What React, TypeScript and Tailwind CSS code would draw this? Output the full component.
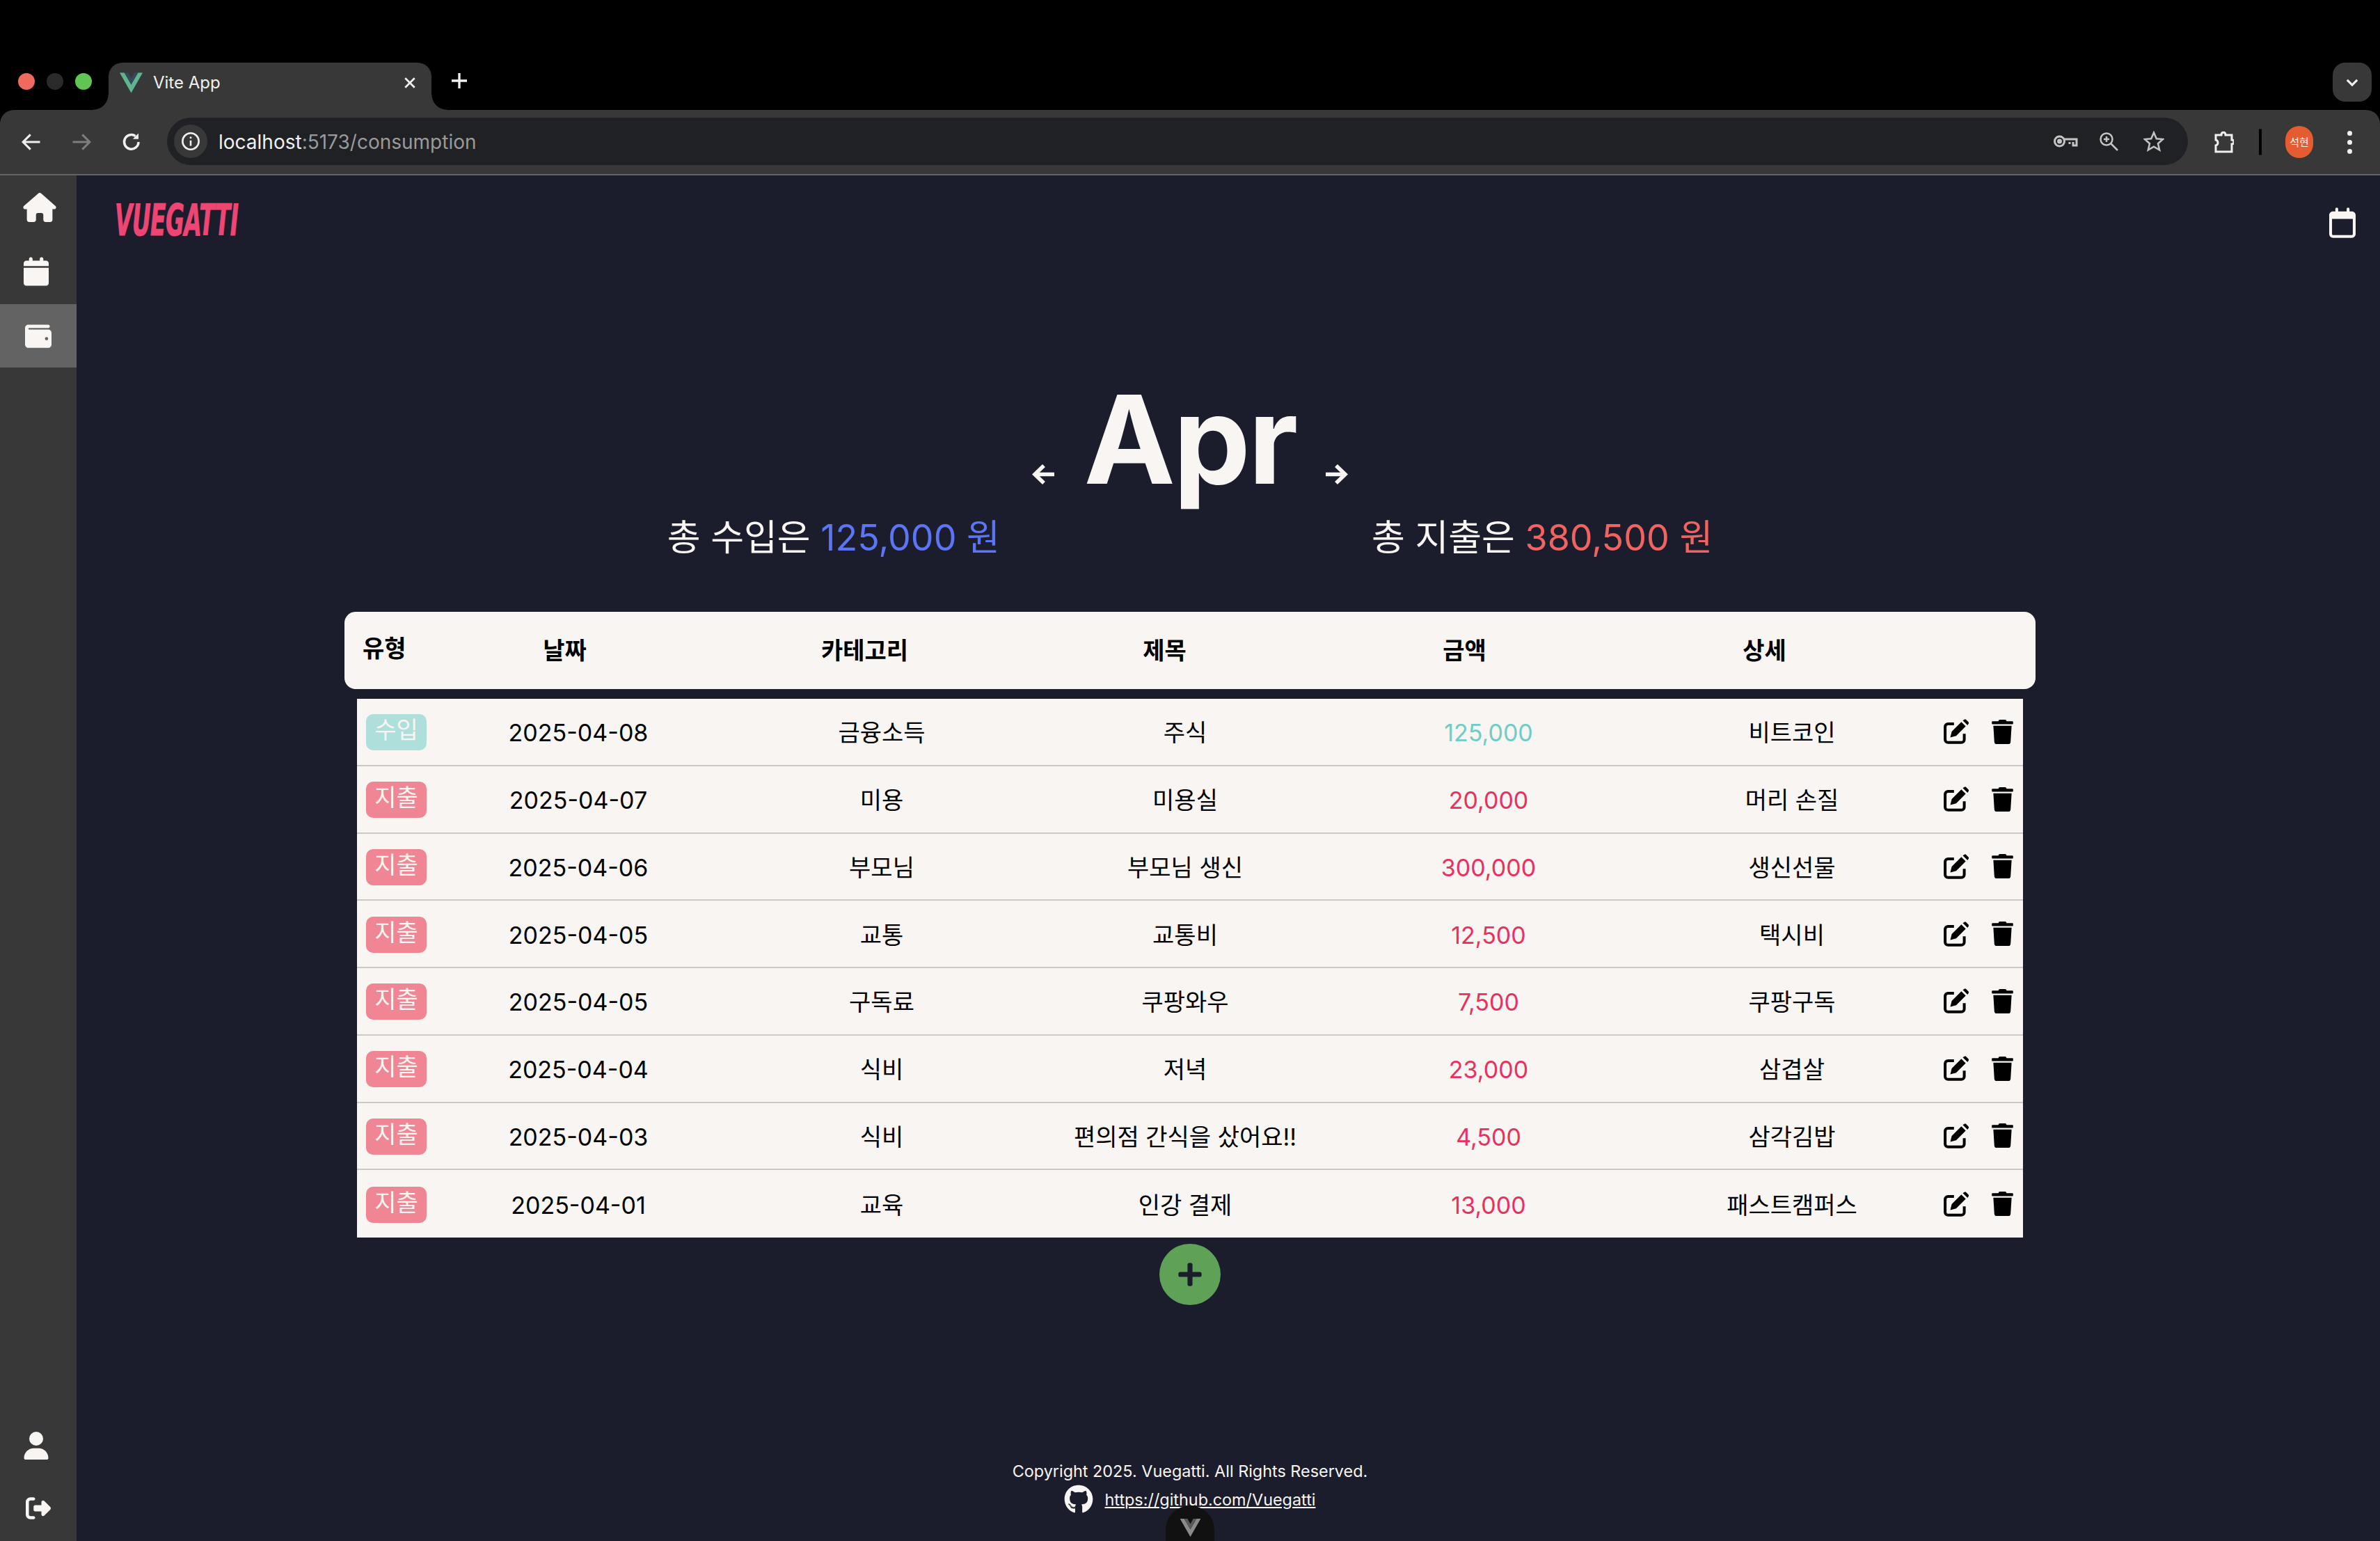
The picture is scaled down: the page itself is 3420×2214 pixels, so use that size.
import React from "react";
import { FaHouse, FaCalendar, FaWallet, FaUser, FaRightFromBracket, FaGithub, FaRegCalendar } from "react-icons/fa6";
import { FaTrash, FaPlus } from "react-icons/fa";

const font = "[font-family:Inter,'Noto_Sans_CJK_KR',sans-serif]";

const rows = [
  ["수입", "2025-04-08", "금융소득", "주식", "125,000", "비트코인"],
  ["지출", "2025-04-07", "미용", "미용실", "20,000", "머리 손질"],
  ["지출", "2025-04-06", "부모님", "부모님 생신", "300,000", "생신선물"],
  ["지출", "2025-04-05", "교통", "교통비", "12,500", "택시비"],
  ["지출", "2025-04-05", "구독료", "쿠팡와우", "7,500", "쿠팡구독"],
  ["지출", "2025-04-04", "식비", "저녁", "23,000", "삼겹살"],
  ["지출", "2025-04-03", "식비", "편의점 간식을 샀어요!!", "4,500", "삼각김밥"],
  ["지출", "2025-04-01", "교육", "인강 결제", "13,000", "패스트캠퍼스"],
];

function VueLogo({ className, a = "#5fb58e", b = "#35495e" }: { className: string; a?: string; b?: string }) {
  return (
    <svg viewBox="0 0 32 28" className={className}>
      <polygon points="0,0 6.5,0 16,16.5 25.5,0 32,0 16,28" fill={a} />
      <polygon points="6.5,0 11.5,0 16,8 20.5,0 25.5,0 16,16.5" fill={b} />
    </svg>
  );
}

function EditIcon() {
  return (
    <svg viewBox="0 0 35 34" className="w-[37px] h-[36px]">
      <path d="M14 6.5 H6 a4 4 0 0 0 -4 4 V28 a4 4 0 0 0 4 4 H24 a4 4 0 0 0 4 -4 V20" fill="none" stroke="#000" strokeWidth="3.8" />
      <polygon points="9,25 11,17 24,4 30,10 17,23" fill="#000" />
      <polygon points="26,2 28.5,0.5 30,0.5 34,4.5 34,6 32.5,8.5" fill="#000" />
    </svg>
  );
}

function MonthArrow({ flip }: { flip?: boolean }) {
  return (
    <svg viewBox="0 0 32 32" className={`w-[32px] h-[32px] mt-[92px] ${flip ? "-scale-x-100" : ""}`} fill="none" stroke="#f8f5f2" strokeWidth="5.6">
      <path d="M32 15.5 H4 M17 3 L4 15.5 L17 28" />
    </svg>
  );
}

function TabBar() {
  return (
    <div className="h-[158px] bg-black flex items-start relative">
      <div className="flex gap-[17px] pl-[26px] pt-[105px] w-[156px] shrink-0">
        <span className="w-6 h-6 rounded-full bg-[#ee6a5f]" />
        <span className="w-6 h-6 rounded-full bg-[#2a2a2a]" />
        <span className="w-6 h-6 rounded-full bg-[#61c554]" />
      </div>
      <div className="relative mt-[90px] h-[68px] w-[464px] bg-[#383838] rounded-t-[20px] flex items-center pl-[16px] pr-[22px] pb-[10px] z-10">
        <span className="absolute -left-[22px] bottom-0 w-[22px] h-[22px] bg-[radial-gradient(circle_at_0_0,#000_21px,#383838_22px)]" />
        <span className="absolute -right-[22px] bottom-0 w-[22px] h-[22px] bg-[radial-gradient(circle_at_100%_0,#000_21px,#383838_22px)]" />
        <VueLogo className="w-[33px] h-[42px]" />
        <span className="ml-[15px] text-[24px] text-[#f0f0f0] font-[Inter,sans-serif] grow">Vite App</span>
        <svg viewBox="0 0 16 16" className="w-[18px] h-[20px]" stroke="#f0f0f0" strokeWidth="2.4"><path d="M2 2 L14 14 M14 2 L2 14" /></svg>
      </div>
      <svg viewBox="0 0 20 20" className="ml-[29px] mt-[105px] w-[22px] h-[22px]" stroke="#f0f0f0" strokeWidth="3"><path d="M10 0 V20 M0 10 H20" /></svg>
      <div className="absolute right-[12px] top-[90px] w-[56px] h-[56px] rounded-[18px] bg-[#383838] flex items-center justify-center">
        <svg viewBox="0 0 20 14" className="w-[18px] h-[13px]" fill="none" stroke="#f0f0f0" strokeWidth="3.4"><path d="M2 3 L10 11 L18 3" /></svg>
      </div>
    </div>
  );
}

function Toolbar() {
  return (
    <div className="h-[94px] bg-[#383838] rounded-t-[20px] border-b-2 border-[#636363] flex items-center pl-[30px] pr-0 relative">
      <div className="flex items-center gap-[42px]">
        <svg viewBox="0 0 24 24" className="w-[30px] h-[30px]" fill="none" stroke="#f0f0f0" strokeWidth="2.4"><path d="M22 12 H3 M11 3.5 L2.5 12 L11 20.5" /></svg>
        <svg viewBox="0 0 24 24" className="w-[30px] h-[30px]" fill="none" stroke="#7d7d7d" strokeWidth="2.4"><path d="M2 12 H21 M13 3.5 L21.5 12 L13 20.5" /></svg>
        <svg viewBox="0 0 24 24" className="w-[30px] h-[30px]" fill="none" stroke="#f0f0f0" strokeWidth="2.8"><path d="M20 12 A8.2 8.2 0 1 1 16.5 5.2" /><path d="M20 2 V8.5 H13.5" fill="#f0f0f0" stroke="none" /></svg>
      </div>
      <div className="ml-[36px] h-[68px] w-[2904px] bg-[#202124] rounded-full flex items-center pl-[10px] pr-[34px] mb-[2px]">
        <span className="w-[48px] h-[48px] rounded-full bg-[#383838] flex items-center justify-center">
          <svg viewBox="0 0 24 24" className="w-[28px] h-[28px]" fill="none" stroke="#f0f0f0" strokeWidth="2.2"><circle cx="12" cy="12" r="10" /><path d="M12 11 V17.5 M12 6.5 V8.5" /></svg>
        </span>
        <span className="ml-[16px] pt-[2px] text-[28px] text-[#f0f0f0] font-[Inter,sans-serif] grow">
          localhost<span className="text-[#9a9a9a]">:5173/consumption</span>
        </span>
        <svg viewBox="0 0 36 24" className="w-[36px] h-[24px] mr-[30px]" fill="none" stroke="#c4c4c4" strokeWidth="3"><circle cx="9.5" cy="12" r="7" /><circle cx="9.5" cy="12" r="2" fill="#c4c4c4" /><path d="M16 9 H34 V18 H29 V13 M24 13 V16" /></svg>
        <svg viewBox="0 0 28 28" className="w-[28px] h-[28px] mr-[36px]" fill="none" stroke="#c4c4c4" strokeWidth="2.5"><circle cx="11" cy="11" r="8.5" /><path d="M17 17 L27 27 M11 7 V15 M7 11 H15" /></svg>
        <svg viewBox="0 0 30 30" className="w-[30px] h-[30px]" fill="none" stroke="#c4c4c4" strokeWidth="2.5"><path d="M15 2.5 L18.8 11.2 L28 12 L21 18.2 L23.2 27.5 L15 22.6 L6.8 27.5 L9 18.2 L2 12 L11.2 11.2 Z" /></svg>
      </div>
      <svg viewBox="0 0 28 32" className="ml-[38px] w-[28px] h-[32px]" fill="none" stroke="#f0f0f0" strokeWidth="3"><path d="M2 6 H10 C10 1 16 1 16 6 H25 V13 C29 13 29 19 25 19 V30 H2 V21 C6 20 6 14 2 13 Z" /></svg>
      <span className="ml-[36px] w-[4px] h-[38px] rounded bg-black" />
      <span className="ml-[34px] w-[40px] h-[46px] rounded-full bg-[#e55c30] text-white text-[15px] flex items-center justify-center font-['Noto_Sans_CJK_KR',sans-serif]">석현</span>
      <span className="ml-[49px] flex flex-col gap-[6px]">
        <span className="w-[7px] h-[7px] rounded-full bg-[#f0f0f0]" />
        <span className="w-[7px] h-[7px] rounded-full bg-[#f0f0f0]" />
        <span className="w-[7px] h-[7px] rounded-full bg-[#f0f0f0]" />
      </span>
    </div>
  );
}

function Sidebar() {
  return (
    <aside className="w-[110px] shrink-0 bg-[#383838] flex flex-col text-[#f8f5f2]">
      <div className="h-[90px] flex items-center justify-center pl-[4px] pt-[1px]"><FaHouse className="w-[48px] h-[42px]" /></div>
      <div className="h-[95px] flex items-center justify-center pr-[6px] pt-[1px]"><FaCalendar className="w-[36px] h-[42px]" /></div>
      <div className="h-[91px] bg-[#636363] flex items-center justify-center"><FaWallet className="w-[42px] h-[38px]" /></div>
      <div className="grow" />
      <div className="h-[90px] flex items-center justify-center pr-[6px]"><FaUser className="w-[36px] h-[40px]" /></div>
      <div className="h-[92px] flex items-center justify-center pr-[1px] pb-[2px]"><FaRightFromBracket className="w-[40px] h-[36px]" /></div>
    </aside>
  );
}

function Row({ r }: { r: string[] }) {
  const income = r[0] === "수입";
  return (
    <div className="grid grid-cols-[100px_436px_436px_436px_436px_436px_114px] h-[96.75px] items-center border-b-2 border-[#cbc8c8] last:border-b-0 text-[34px] text-black text-center">
      <div className="pl-[13px] pt-[2px]">
        <span className={`block w-[87px] h-[52px] rounded-[10px] text-[#f8f5f2] text-[34px] leading-[46px] ${income ? "bg-[#aedfdb]" : "bg-[#f08593]"}`}>{r[0]}</span>
      </div>
      <div className="pt-[3px]">{r[1]}</div>
      <div className="pt-[3px]">{r[2]}</div>
      <div className="pt-[3px]">{r[3]}</div>
      <div className={`pt-[3px] ${income ? "text-[#6fcdc6]" : "text-[#e8315f]"}`}>{r[4]}</div>
      <div className="pt-[3px]">{r[5]}</div>
      <div className="flex items-center gap-[32px]">
        <EditIcon />
        <FaTrash className="w-[31px] h-[35px]" />
      </div>
    </div>
  );
}

export default function App() {
  return (
    <div className={`w-[3420px] h-[2214px] overflow-hidden flex flex-col bg-black relative ${font}`}>
      <TabBar />
      <Toolbar />
      <div className="flex grow bg-[#1b1d2c] min-h-0">
        <Sidebar />
        <main className="grow flex flex-col min-w-0">
          <header className="flex items-start justify-between pl-[55px] pr-[35px] h-[289px]">
            <span className="mt-[30px] text-[#ee4673] text-[62px] leading-[70px] italic font-bold tracking-[-1px] inline-block origin-left scale-x-[0.53] [-webkit-text-stroke:1px_#ee4673] font-['DejaVu_Sans',sans-serif]">VUEGATTI</span>
            <FaRegCalendar className="mt-[46px] w-[38px] h-[44px] text-[#f8f5f2]" />
          </header>
          <div className="pr-[110px] flex flex-col items-center text-[#f8f5f2]">
            <div className="flex items-center h-[190px]">
              <MonthArrow />
              <h1 className="mx-[42px] text-[176px] leading-[190px] font-bold tracking-[-3px] mt-[-10px]">Apr</h1>
              <MonthArrow flip />
            </div>
            <div className="flex gap-[534px] text-[52px] leading-[70px] mt-[7px]">
              <div>총 수입은 <span className="text-[#5b75f5]">125,000 원</span></div>
              <div>총 지출은 <span className="text-[#ef6461]">380,500 원</span></div>
            </div>
            <div className="mt-[71px] w-[2430px] h-[111px] rounded-[16px] bg-[#f8f5f2] grid grid-cols-[101px_431px_431px_431px_431px_431px_174px] items-center text-center text-[34px] font-bold text-black">
              <div className="pl-[26px] pb-[6px] text-left">유형</div>
              <div>날짜</div>
              <div>카테고리</div>
              <div>제목</div>
              <div>금액</div>
              <div>상세</div>
            </div>
            <div className="mt-[14px] w-[2394px] bg-[#f8f5f2]">
              {rows.map((r, i) => <Row key={i} r={r} />)}
            </div>
            <button className="mt-[9px] w-[88px] h-[88px] rounded-full bg-[#5fa157] flex items-center justify-center text-[#1b1d2c]">
              <FaPlus className="w-[38px] h-[38px]" />
            </button>
            <div className="mt-[219px] flex flex-col items-center text-[23.4px] leading-[39px]">
              <div>Copyright 2025. Vuegatti. All Rights Reserved.</div>
              <div className="flex items-center gap-[16px]">
                <FaGithub className="w-[42px] h-[42px]" />
                <a className="underline">https://github.com/Vuegatti</a>
              </div>
            </div>
          </div>
        </main>
      </div>
      <div className="absolute left-[1675px] top-[2163px] w-[70px] h-[90px] rounded-t-[35px] bg-[#111111] flex justify-center pt-[19px]">
        <VueLogo className="w-[31px] h-[26px]" a="#8a8a8a" b="#5a5a5a" />
      </div>
    </div>
  );
}
